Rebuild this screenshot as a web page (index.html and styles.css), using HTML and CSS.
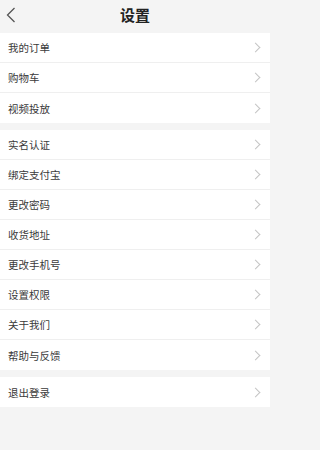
FILE: index.html
```html
<!DOCTYPE html>
<html lang="zh-CN">
<head>
<meta charset="utf-8">
<link rel="stylesheet" href="styles.css">
</head>
<body>
<div class="page">
  <header class="bar">
    <svg class="back" width="10" height="16" viewBox="0 0 10 16"><polyline points="8.5,1 1.5,8 8.5,15" fill="none" stroke="#555" stroke-width="1.3"/></svg>
    <h1 class="title">设置</h1>
  </header>
  <ul class="group">
    <li class="row"><span>我的订单</span><i class="arr"></i></li>
    <li class="row"><span>购物车</span><i class="arr"></i></li>
    <li class="row"><span>视频投放</span><i class="arr"></i></li>
  </ul>
  <ul class="group">
    <li class="row"><span>实名认证</span><i class="arr"></i></li>
    <li class="row"><span>绑定支付宝</span><i class="arr"></i></li>
    <li class="row"><span>更改密码</span><i class="arr"></i></li>
    <li class="row"><span>收货地址</span><i class="arr"></i></li>
    <li class="row"><span>更改手机号</span><i class="arr"></i></li>
    <li class="row"><span>设置权限</span><i class="arr"></i></li>
    <li class="row"><span>关于我们</span><i class="arr"></i></li>
    <li class="row"><span>帮助与反馈</span><i class="arr"></i></li>
  </ul>
  <ul class="group">
    <li class="row"><span>退出登录</span><i class="arr"></i></li>
  </ul>
</div>
</body>
</html>
```
FILE: styles.css
```css
html, body {
  margin: 0;
  padding: 0;
  background: #f4f4f4;
}
.page {
  width: 270px;
  min-height: 450px;
  font-family: "Noto Sans CJK SC", "Noto Sans", sans-serif;
  color: #3a3a3a;
  display: flex;
  flex-direction: column;
  gap: 7px;
}
.bar {
  height: 33px;
  box-sizing: border-box;
  padding-bottom: 4px;
  margin-bottom: -7px;
  display: flex;
  align-items: center;
  justify-content: center;
  position: relative;
  background: #f4f4f4;
}
.back {
  position: absolute;
  left: 6px;
  top: 7px;
}
.title {
  margin: 0;
  font-size: 15px;
  font-weight: 700;
  color: #222;
  line-height: 1;
}
.group {
  list-style: none;
  margin: 0;
  padding: 0;
  background: #fff;
}
.row {
  height: 30px;
  box-sizing: border-box;
  border-bottom: 1px solid #efefef;
  padding: 0 8px 0 8px;
  display: flex;
  align-items: center;
  justify-content: space-between;
  font-size: 10.5px;
}
.row:last-child {
  border-bottom: none;
}
.arr {
  width: 6px;
  height: 6px;
  border-top: 1px solid #c4c4c4;
  border-right: 1px solid #c4c4c4;
  transform: rotate(45deg);
  margin-right: 3px;
}
```
